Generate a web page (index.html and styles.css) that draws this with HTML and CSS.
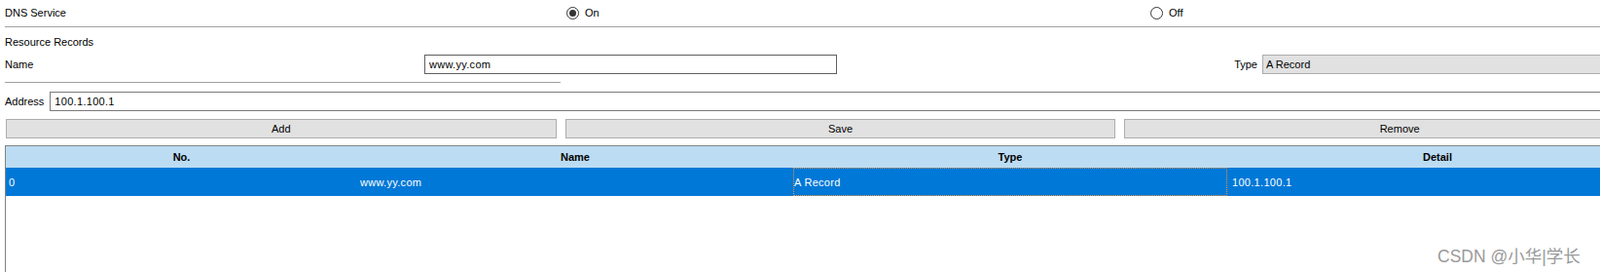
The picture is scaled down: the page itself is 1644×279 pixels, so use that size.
FILE: index.html
```html
<!DOCTYPE html>
<html lang="en">
<head>
    <meta charset="UTF-8">
    <meta name="viewport" content="width=device-width, initial-scale=1.0">
    <title>DNS Service</title>
    <link rel="stylesheet" href="styles.css">
</head>
<body>
    <div class="panel">
        <!-- Service switch -->
        <div class="service-row">
            <span>DNS Service</span>
            <label class="radio"><span class="dot checked"></span>On</label>
            <label class="radio"><span class="dot"></span>Off</label>
        </div>
        <div class="sep"></div>

        <div class="section-title">Resource Records</div>
        <div class="name-row">
            <span>Name</span>
            <div class="field name-field">www.yy.com</div>
            <span class="type-label">Type</span>
            <div class="select">A Record</div>
        </div>
        <div class="sep short"></div>

        <div class="address-row">
            <span>Address</span>
            <div class="field address-field">100.1.100.1</div>
        </div>

        <div class="buttons">
            <button class="btn">Add</button>
            <button class="btn">Save</button>
            <button class="btn">Remove</button>
        </div>

        <!-- Records table -->
        <div class="table-box">
            <table class="records">
                <colgroup>
                    <col class="col-no">
                    <col class="col-name">
                    <col class="col-type">
                    <col class="col-detail">
                </colgroup>
                <thead>
                    <tr>
                        <th>No.</th>
                        <th>Name</th>
                        <th>Type</th>
                        <th>Detail</th>
                    </tr>
                </thead>
                <tbody>
                    <tr class="selected">
                        <td>0</td>
                        <td>www.yy.com</td>
                        <td class="focus">A Record</td>
                        <td class="detail">100.1.100.1</td>
                    </tr>
                </tbody>
            </table>
        </div>
    </div>

    <div class="watermark">CSDN @小华|学长</div>
</body>
</html>
```

FILE: styles.css
```css
body {
    margin: 0;
    padding: 0;
    width: 1644px;
    height: 279px;
    overflow: hidden;
    background-color: #ffffff;
    font-family: "Liberation Sans", Arial, sans-serif;
    font-size: 11px;
    color: #000;
    position: relative;
}

.panel {
    width: 1716px;
    margin-left: 5px;
}

.service-row {
    height: 27px;
    display: grid;
    grid-template-columns: 577px 600px 1fr;
    align-items: center;
    line-height: 15px;
}

.radio {
    display: flex;
    align-items: center;
    gap: 6px;
}

.dot {
    width: 11px;
    height: 11px;
    border: 1px solid #333;
    border-radius: 50%;
    display: flex;
    align-items: center;
    justify-content: center;
}

.dot.checked::after {
    content: '';
    width: 7px;
    height: 7px;
    border-radius: 50%;
    background-color: #333;
}

.sep {
    height: 1px;
    background-color: #a0a0a0;
}

.sep.short {
    width: 571px;
    margin-top: 8px;
}

.section-title {
    margin-top: 8px;
    line-height: 15px;
}

.name-row {
    margin-top: 5px;
    height: 20px;
    display: grid;
    grid-template-columns: 431px 424px 1fr 424px;
    align-items: center;
    line-height: 15px;
}

.type-label {
    justify-self: end;
    padding-right: 5px;
}

.field {
    box-sizing: border-box;
    height: 20px;
    border: 1px solid #7a7a7a;
    background-color: #fff;
    padding: 2px 4px;
    line-height: 15px;
    letter-spacing: 0.3px;
}

.name-field {
    border-color: #5f5f5f;
}

.select {
    box-sizing: border-box;
    height: 20px;
    border: 1px solid #adadad;
    background-color: #e1e1e1;
    padding: 2px 3px;
    line-height: 15px;
}

.address-row {
    margin-top: 9px;
    display: flex;
    align-items: center;
    gap: 6px;
    line-height: 15px;
}

.address-field {
    flex: 1;
}

.buttons {
    margin-top: 8px;
    padding-left: 1px;
    display: grid;
    grid-template-columns: repeat(3, 1fr);
    gap: 9px;
}

.btn {
    height: 20px;
    border: 1px solid #adadad;
    background-color: #e1e1e1;
    font-family: inherit;
    font-size: 11px;
    color: #000;
    padding: 0;
}

.table-box {
    margin-top: 7px;
    height: 160px;
    border: 1px solid #828282;
    border-right: none;
}

.records {
    width: 1687px;
    table-layout: fixed;
    border-collapse: collapse;
}

.col-no { width: 361px; }
.col-name { width: 448px; }
.col-type { width: 446px; }
.col-detail { width: 432px; }

.records th {
    height: 22px;
    padding: 0;
    background-color: #bcdcf3;
    font-weight: bold;
    text-align: center;
}

.records td {
    height: 29px;
    padding: 0 0 0 3px;
    box-sizing: border-box;
    text-align: left;
    color: #fff;
    letter-spacing: 0.3px;
}

.selected {
    background-color: #0078d7;
}

.records td.focus {
    padding-left: 1px;
    outline: 1px dotted #e8913a;
    outline-offset: -1px;
}

.records td.detail {
    padding-left: 5px;
}

.watermark {
    position: absolute;
    left: 1477px;
    top: 249px;
    font-family: "Liberation Sans", "Noto Sans CJK SC", sans-serif;
    font-size: 17.5px;
    color: #9a9a9a;
    white-space: nowrap;
}
```
